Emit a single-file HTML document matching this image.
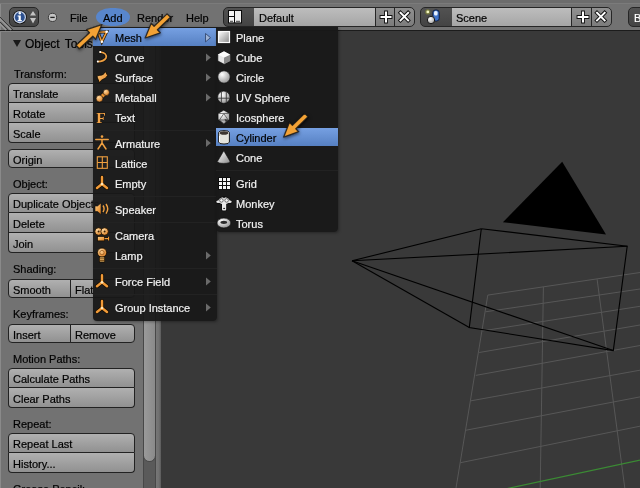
<!DOCTYPE html>
<html><head><meta charset="utf-8">
<style>
*{box-sizing:border-box;margin:0;padding:0}
html,body{width:640px;height:488px;overflow:hidden;background:#393939;font-family:"Liberation Sans",sans-serif;font-size:11px;position:relative}
.a{position:absolute}
#hdr{left:0;top:0;width:640px;height:30px;background:#727272}
#hdrline{left:0;top:30px;width:640px;height:1px;background:#1c1c1c}
#shelf{left:0;top:31px;width:161px;height:457px;background:#727272;border-left:1px solid #8a8a8a}
.lbl{will-change:transform;-webkit-text-stroke:0.2px currentColor;position:absolute;color:#000;font-size:11px;white-space:nowrap}
.btn{will-change:transform;-webkit-text-stroke:0.2px #000;position:absolute;left:8px;width:127px;height:20px;border:1px solid #222;background:linear-gradient(#b0b0b0,#919191);color:#000;white-space:nowrap;overflow:hidden;padding-left:4px;line-height:20px}
.menu{position:absolute;background:rgba(24,24,24,0.95);color:#f2f2f2;border-radius:0 0 4px 4px;box-shadow:1px 1px 3px rgba(0,0,0,.35)}
.mi{position:absolute;left:0;right:0;height:18px;line-height:18px;white-space:nowrap}
.mi span{position:absolute}
.sel{background:linear-gradient(#76a0e2,#5680c2);color:#000}
.sep{position:absolute;left:0;right:0;height:1px;background:#222222}
.mi span{top:1px;will-change:transform;-webkit-text-stroke:0.2px currentColor}
.arr{position:absolute;width:0;height:0;border-left:4px solid #555;border-top:4px solid transparent;border-bottom:4px solid transparent}
</style></head><body>
<!-- viewport -->
<svg class="a" style="left:0;top:0" width="640" height="488">
 <g stroke="#575757" stroke-width="1" fill="none">
  <line x1="487.8" y1="295.1" x2="456" y2="488"/>
  <line x1="543.4" y1="287" x2="540.2" y2="488"/>
  <line x1="597.1" y1="279.2" x2="624.8" y2="488"/>
  <line x1="487.8" y1="295.1" x2="640" y2="272.5"/>
  <line x1="485.4" y1="311.8" x2="640" y2="289"/>
  <line x1="482.3" y1="330.9" x2="640" y2="306.3"/>
  <line x1="479.2" y1="352.5" x2="640" y2="325"/>
  <line x1="475.8" y1="375.4" x2="640" y2="345.5"/>
  <line x1="470.5" y1="400.9" x2="640" y2="370.2"/>
  <line x1="465.5" y1="430.3" x2="640" y2="396.9"/>
  <line x1="460.5" y1="462.7" x2="640" y2="426.2"/>
 </g>
 <line x1="454.2" y1="499.9" x2="640" y2="460.2" stroke="#3b8a34" stroke-width="1.2"/>
 <polygon points="562.2,161.7 502.9,222.2 606,234.4" fill="#000"/>
 <g stroke="#000" stroke-width="1.1" fill="none">
  <polyline points="481.3,228.7 627.2,246.3 613.3,350.6 469.3,327.5 481.3,228.7"/>
  <line x1="352" y1="260.8" x2="481.3" y2="228.7"/>
  <line x1="352" y1="260.8" x2="627.2" y2="246.3"/>
  <line x1="352" y1="260.8" x2="469.3" y2="327.5"/>
  <line x1="352" y1="260.8" x2="613.3" y2="350.6"/>
 </g>
</svg>

<div id="hdr" class="a"></div>
<div id="hdrline" class="a"></div>
<div class="a" style="left:0;top:0;width:1px;height:30px;background:#8a8a8a"></div>
<!-- header widgets -->
<div class="a" style="left:0;top:0;width:640px;height:4px;background:#6c6c6c;border-bottom:1px solid #7b7b7b"></div>
<div class="a" style="left:9px;top:7px;width:30px;height:20px;border-radius:5px;background:linear-gradient(#525252,#444444);border:1px solid #262626"></div>
<div class="a" style="left:95.5px;top:7.5px;width:34.5px;height:18.5px;border-radius:15px / 9.25px;background:#5886cc"></div>
<div class="lbl" style="left:70px;top:12px">File</div>
<div class="lbl" style="left:103px;top:12px">Add</div>
<div class="lbl" style="left:137px;top:12px">Render</div>
<div class="lbl" style="left:186px;top:12px">Help</div>
<div class="a" style="left:223px;top:7px;width:32px;height:20px;border-radius:5px 0 0 5px;background:linear-gradient(#525252,#444444);border:1px solid #262626"></div>
<div class="a" style="left:254px;top:7px;width:122px;height:20px;background:linear-gradient(#bdbdbd,#a6a6a6);border:1px solid #262626;border-left:none"></div>
<div class="a" style="left:375px;top:7px;width:20px;height:20px;background:linear-gradient(#909090,#7c7c7c);border:1px solid #262626"></div>
<div class="a" style="left:394px;top:7px;width:21px;height:20px;border-radius:0 5px 5px 0;background:linear-gradient(#909090,#7c7c7c);border:1px solid #262626"></div>
<div class="lbl" style="left:259px;top:12px">Default</div>
<div class="a" style="left:420px;top:7px;width:33px;height:20px;border-radius:5px 0 0 5px;background:linear-gradient(#525252,#444444);border:1px solid #262626"></div>
<div class="a" style="left:452px;top:7px;width:120px;height:20px;background:linear-gradient(#bdbdbd,#a6a6a6);border:1px solid #262626;border-left:none"></div>
<div class="a" style="left:571px;top:7px;width:21px;height:20px;background:linear-gradient(#909090,#7c7c7c);border:1px solid #262626"></div>
<div class="a" style="left:591px;top:7px;width:21px;height:20px;border-radius:0 5px 5px 0;background:linear-gradient(#909090,#7c7c7c);border:1px solid #262626"></div>
<div class="lbl" style="left:456px;top:12px">Scene</div>
<div class="a" style="left:628px;top:7px;width:20px;height:20px;border-radius:5px;background:linear-gradient(#525252,#444444);border:1px solid #262626"></div>
<div class="lbl" style="left:634px;top:12px;color:#fff">B</div>
<svg class="a" style="left:0;top:0" width="640" height="31">
 <!-- region corner lines -->
 <g stroke="#9a9a9a" stroke-width="1.3"><line x1="0" y1="19" x2="11" y2="30"/><line x1="0" y1="24" x2="6" y2="30"/></g>
 <g stroke="#3a3a3a" stroke-width="1"><line x1="0" y1="17" x2="13" y2="30"/><line x1="0" y1="22" x2="8" y2="30"/></g>
 <!-- info -->
 <circle cx="19.8" cy="17.2" r="7" fill="#141414"/>
 <circle cx="19.8" cy="17.2" r="6.2" fill="#c4d0e6"/>
 <circle cx="19.8" cy="17.2" r="4.9" fill="#2c5090"/>
 <circle cx="19.8" cy="13.2" r="1.2" fill="#fff"/>
 <path d="M17.6 15.4h3.2v4.6h1v1.2h-4.2v-1.2h1v-3.4h-1z" fill="#fff"/>
 <path d="M30 15.5 L33 11 L36 15.5Z M30 18 L33 23.4 L36 18Z" fill="#c4c4c4"/>
 <!-- minus circle -->
 <circle cx="52.5" cy="17.4" r="4.1" fill="#c4c4c4" stroke="#3c3c3c" stroke-width="1"/>
 <line x1="50.3" y1="17.4" x2="54.7" y2="17.4" stroke="#222" stroke-width="1.3"/>
 <!-- layout icon -->
 <rect x="228" y="10" width="14" height="13.4" fill="#0a0a0a"/>
 <rect x="229" y="11" width="5" height="5" fill="#f4f4f4"/>
 <rect x="229" y="17" width="5" height="5.4" fill="#f4f4f4"/>
 <rect x="235" y="11" width="6" height="11.4" fill="#eeeeee"/>
 <path d="M230 21.3h3M236 21.3h4" stroke="#444" stroke-width="1"/>
 <!-- plus / x -->
 <g stroke="#111" stroke-width="3.8" stroke-linecap="square"><path d="M386 12.5v9M381.5 17h9"/><path d="M400.5 12.8l7.6 7.6M408.1 12.8l-7.6 7.6"/><path d="M583 12.5v9M578.5 17h9"/><path d="M597 12.8l7.6 7.6M604.6 12.8l-7.6 7.6"/></g>
 <g stroke="#fff" stroke-width="2" stroke-linecap="square"><path d="M386 12.5v9M381.5 17h9"/><path d="M400.5 12.8l7.6 7.6M408.1 12.8l-7.6 7.6"/><path d="M583 12.5v9M578.5 17h9"/><path d="M597 12.8l7.6 7.6M604.6 12.8l-7.6 7.6"/></g>
 <!-- scene icon -->
 <circle cx="427.8" cy="11.9" r="2.6" fill="#9aa030" opacity="0.5"/>
 <circle cx="427.8" cy="11.9" r="1.4" fill="#f4f8c0"/>
 <rect x="432.8" y="10" width="6.4" height="11" rx="2.6" fill="#3f72c8" stroke="#0c1a3a" stroke-width="0.9"/>
 <rect x="434" y="11" width="3.6" height="4.5" rx="1.6" fill="#e6f0ff"/>
 <circle cx="431" cy="20" r="3.7" fill="url(#wr2)" stroke="#0a0a0a" stroke-width="0.9"/>
 <defs><radialGradient id="wr2" cx="0.4" cy="0.35" r="0.7"><stop offset="0" stop-color="#ffffff"/><stop offset="1" stop-color="#9a9a9a"/></radialGradient></defs>
</svg>
<div id="shelf" class="a"></div>
<div class="a" style="left:0;top:31px;width:161px;height:1px;background:#858585"></div>

<!-- shelf content -->
<div class="a" style="left:13px;top:40px;width:0;height:0;border-left:4px solid transparent;border-right:4px solid transparent;border-top:7px solid #1a1a1a"></div>
<div class="lbl" style="left:25px;top:37px;font-size:12px;word-spacing:2px">Object Tools</div>
<div class="lbl" style="left:14px;top:68px">Transform:</div>
<div class="btn" style="top:83px;border-radius:4px 4px 0 0">Translate</div>
<div class="btn" style="top:103px;border-top:none;padding-top:1px;height:20px">Rotate</div>
<div class="btn" style="top:123px;border-top:none;padding-top:1px;border-radius:0 0 4px 4px">Scale</div>
<div class="btn" style="top:149px;height:19px;border-radius:4px">Origin</div>
<div class="lbl" style="left:13px;top:178px">Object:</div>
<div class="btn" style="top:193px;border-radius:4px 4px 0 0">Duplicate Objects</div>
<div class="btn" style="top:213px;border-top:none;padding-top:1px">Delete</div>
<div class="btn" style="top:233px;border-top:none;padding-top:1px;border-radius:0 0 4px 4px">Join</div>
<div class="lbl" style="left:13px;top:263px">Shading:</div>
<div class="btn" style="top:279px;width:63px;height:19px;border-radius:4px 0 0 4px">Smooth</div>
<div class="btn" style="top:279px;left:70px;width:65px;height:19px;border-radius:0 4px 4px 0">Flat</div>
<div class="lbl" style="left:13px;top:308px">Keyframes:</div>
<div class="btn" style="top:324px;width:63px;height:19px;border-radius:4px 0 0 4px">Insert</div>
<div class="btn" style="top:324px;left:70px;width:65px;height:19px;border-radius:0 4px 4px 0">Remove</div>
<div class="lbl" style="left:13px;top:353px">Motion Paths:</div>
<div class="btn" style="top:368px;border-radius:4px 4px 0 0">Calculate Paths</div>
<div class="btn" style="top:388px;border-top:none;padding-top:1px;border-radius:0 0 4px 4px">Clear Paths</div>
<div class="lbl" style="left:13px;top:418px">Repeat:</div>
<div class="btn" style="top:433px;border-radius:4px 4px 0 0">Repeat Last</div>
<div class="btn" style="top:453px;border-top:none;padding-top:1px;border-radius:0 0 4px 4px">History...</div>
<div class="lbl" style="left:13px;top:483px">Grease Pencil:</div>
<!-- scrollbar -->
<div class="a" style="left:143px;top:31px;width:13px;height:457px;background:#5a5a5a;border-left:1px solid #484848;border-right:1px solid #484848"></div>
<div class="a" style="left:143px;top:31px;width:13px;height:431px;background:linear-gradient(90deg,#9a9a9a,#8a8a8a);border-radius:0 0 7px 7px;border:1px solid #484848;border-top:none;padding-top:1px"></div>
<div class="a" style="left:156px;top:31px;width:5px;height:457px;background:linear-gradient(90deg,#777,#707070 60%,#5a5a5a)"></div>

<!-- main menu -->
<div class="menu" style="left:93px;top:27px;width:124px;height:294px">
 <div class="mi sel" style="top:1px"><span style="left:22px">Mesh</span></div>
 <div class="mi" style="top:21px"><span style="left:22px">Curve</span></div>
 <div class="mi" style="top:41px"><span style="left:22px">Surface</span></div>
 <div class="mi" style="top:61px"><span style="left:22px">Metaball</span></div>
 <div class="mi" style="top:81px"><span style="left:22px">Text</span></div>
 <div class="sep" style="top:103px"></div>
 <div class="mi" style="top:107px"><span style="left:22px">Armature</span></div>
 <div class="mi" style="top:127px"><span style="left:22px">Lattice</span></div>
 <div class="mi" style="top:147px"><span style="left:22px">Empty</span></div>
 <div class="sep" style="top:169px"></div>
 <div class="mi" style="top:173px"><span style="left:22px">Speaker</span></div>
 <div class="sep" style="top:195px"></div>
 <div class="mi" style="top:199px"><span style="left:22px">Camera</span></div>
 <div class="mi" style="top:219px"><span style="left:22px">Lamp</span></div>
 <div class="sep" style="top:241px"></div>
 <div class="mi" style="top:245px"><span style="left:22px">Force Field</span></div>
 <div class="sep" style="top:267px"></div>
 <div class="mi" style="top:271px"><span style="left:22px">Group Instance</span></div>
</div>

<!-- sub menu -->
<div class="menu" style="left:216px;top:27px;width:122px;height:205px">
 <div class="mi" style="top:1px"><span style="left:20px">Plane</span></div>
 <div class="mi" style="top:21px"><span style="left:20px">Cube</span></div>
 <div class="mi" style="top:41px"><span style="left:20px">Circle</span></div>
 <div class="mi" style="top:61px"><span style="left:20px">UV Sphere</span></div>
 <div class="mi" style="top:81px"><span style="left:20px">Icosphere</span></div>
 <div class="mi sel" style="top:101px"><span style="left:20px">Cylinder</span></div>
 <div class="mi" style="top:121px"><span style="left:20px">Cone</span></div>
 <div class="sep" style="top:143px"></div>
 <div class="mi" style="top:147px"><span style="left:20px">Grid</span></div>
 <div class="mi" style="top:167px"><span style="left:20px">Monkey</span></div>
 <div class="mi" style="top:187px"><span style="left:20px">Torus</span></div>
</div>

<svg class="a" style="left:0;top:0" width="640" height="488">
 <defs>
  <linearGradient id="og" x1="0" y1="0" x2="1" y2="1"><stop offset="0" stop-color="#ffd08a"/><stop offset="1" stop-color="#e07d18"/></linearGradient>
  <linearGradient id="wg" x1="0" y1="0" x2="1" y2="1"><stop offset="0" stop-color="#ffffff"/><stop offset="1" stop-color="#8a8a8a"/></linearGradient>
  <radialGradient id="wr" cx="0.35" cy="0.3" r="0.8"><stop offset="0" stop-color="#ffffff"/><stop offset="1" stop-color="#8c8c8c"/></radialGradient>
  <radialGradient id="orr" cx="0.35" cy="0.3" r="0.8"><stop offset="0" stop-color="#ffd9a0"/><stop offset="1" stop-color="#d9781a"/></radialGradient>
 </defs>
 <!-- submenu arrows -->
 <g fill="#6a6a6a">
  <path d="M205.5 33.5l5 4.2-5 4.2z" fill="#9fb4d6" stroke="#2a3e66" stroke-width="0.8"/>
  <path d="M206 53.5l4.8 4-4.8 4z"/>
  <path d="M206 73.5l4.8 4-4.8 4z"/>
  <path d="M206 93.5l4.8 4-4.8 4z"/>
  <path d="M206 139l4.8 4-4.8 4z"/>
  <path d="M206 251.5l4.8 4-4.8 4z"/>
  <path d="M206 277.5l4.8 4-4.8 4z"/>
  <path d="M206 303.5l4.8 4-4.8 4z"/>
 </g>
 <!-- mesh -->
 <path d="M98 32.3 L106.7 31.8 L101.8 41.8Z" fill="none" stroke="#2a1a00" stroke-width="3"/>
 <path d="M98 32.3 L106.7 31.8 L101.8 41.8Z" fill="none" stroke="#f0a040" stroke-width="1.5"/>
 <g fill="#fff"><circle cx="98" cy="32.3" r="1.3"/><circle cx="106.7" cy="31.8" r="1.3"/><circle cx="101.8" cy="41.8" r="1.3"/></g>
 <!-- curve -->
 <path d="M100.2 52 Q107.5 53 106 58 Q104 61.5 97.8 61.6" fill="none" stroke="#111" stroke-width="3.2" stroke-linecap="round"/>
 <path d="M100.2 52 Q107.5 53 106 58 Q104 61.5 97.8 61.6" fill="none" stroke="#f0a040" stroke-width="1.6" stroke-linecap="round"/>
 <circle cx="100.2" cy="52" r="1" fill="#fff"/><circle cx="97.8" cy="61.6" r="1" fill="#fff"/>
 <!-- surface -->
 <path d="M97 76.8 C99.5 73.5 102 77.5 105.6 71.5 L107.6 75.6 C104.6 80.2 102.2 78 99.4 82.8 Z" fill="url(#og)" stroke="#140c00" stroke-width="0.9" stroke-linejoin="round"/>
 <!-- metaball -->
 <line x1="99.5" y1="98.6" x2="106.3" y2="92.4" stroke="#111" stroke-width="4.6"/><line x1="99.5" y1="98.6" x2="106.3" y2="92.4" stroke="#e8902e" stroke-width="3.4"/>
 <circle cx="99.5" cy="98.6" r="3.4" fill="url(#orr)" stroke="#111" stroke-width="0.6"/>
 <circle cx="106.3" cy="92.4" r="3.1" fill="url(#orr)" stroke="#111" stroke-width="0.6"/>
 <!-- text F -->
 <text x="96.2" y="122.8" font-family="Liberation Serif" font-size="15.5" font-weight="bold" fill="#f5a548" stroke="#1a0e00" stroke-width="0.5" paint-order="stroke">F</text>
 <!-- armature -->
 <g stroke="#f0a040" stroke-width="1.5" fill="none" stroke-linecap="round">
  <path d="M95.8 139.5H108.2M102 139.5V143M102 143L98 149M102 143L106 149"/>
 </g>
 <circle cx="102" cy="136.6" r="1.3" fill="#f0a040"/>
 <!-- lattice -->
 <g stroke="#f0a040" stroke-width="1.1" fill="none">
  <rect x="97.3" y="156.8" width="10" height="11.5"/><path d="M102.3 156.8V168.3M97.3 162.5H107.3"/>
 </g>
 <!-- empty / force / group -->
 <path d="M102.0 177.0V184.0M102.0 184.0L97.0 188.0M102.0 184.0L107.0 188.0M102.0 275.3V282.3M102.0 282.3L97.0 286.3M102.0 282.3L107.0 286.3M102.0 301.0V308.0M102.0 308.0L97.0 312.0M102.0 308.0L107.0 312.0" stroke="#140c00" stroke-width="3.8" fill="none" stroke-linecap="round"/>
 <path d="M102.0 177.0V184.0M102.0 184.0L97.0 188.0M102.0 184.0L107.0 188.0M102.0 275.3V282.3M102.0 282.3L97.0 286.3M102.0 282.3L107.0 286.3M102.0 301.0V308.0M102.0 308.0L97.0 312.0M102.0 308.0L107.0 312.0" stroke="#f09a38" stroke-width="2.4" fill="none" stroke-linecap="round"/>
 <circle cx="102.0" cy="184.0" r="1.3" fill="#ffe6b8"/>
 <circle cx="102.0" cy="282.3" r="1.3" fill="#ffe6b8"/>
 <circle cx="102.0" cy="308.0" r="1.3" fill="#ffe6b8"/>
 <!-- speaker -->
 <path d="M95 206h2.5l3.5-3v11.5l-3.5-3H95z" fill="url(#og)" stroke="#111" stroke-width="0.6"/>
 <path d="M103 205.5q2.2 3.3 0 6.6M106 204q3.4 4.8 0 9.6" fill="none" stroke="#f0a040" stroke-width="1.4"/>
 <!-- camera -->
 <circle cx="98.6" cy="231.5" r="3.8" fill="url(#orr)" stroke="#140c00" stroke-width="0.8"/>
 <circle cx="104.6" cy="231.5" r="3.8" fill="url(#orr)" stroke="#140c00" stroke-width="0.8"/>
 <circle cx="98.6" cy="231.5" r="1" fill="#3a2000"/><circle cx="104.6" cy="231.5" r="1" fill="#3a2000"/>
 <rect x="97.5" y="236.5" width="7" height="4.4" fill="url(#og)" stroke="#140c00" stroke-width="0.7"/>
 <path d="M104.5 238.6h4M108.6 236.8v3.6" stroke="#140c00" stroke-width="2.2"/>
 <path d="M104.5 238.6h4M108.6 236.8v3.6" stroke="#f09a38" stroke-width="1.1"/>
 <!-- lamp -->
 <circle cx="102" cy="252.6" r="4.6" fill="url(#orr)" stroke="#140c00" stroke-width="0.8"/>
 <circle cx="102" cy="252.6" r="2.2" fill="none" stroke="#8a4a10" stroke-width="0.7"/>
 <rect x="99.4" y="257" width="5.2" height="5" fill="#f2c070" stroke="#140c00" stroke-width="0.7"/>
 <path d="M99.4 258.8h5.2M99.4 260.6h5.2" stroke="#5a3000" stroke-width="0.8"/>
 <!-- plane -->
 <rect x="218.5" y="31.5" width="11" height="11" fill="url(#wg)" stroke="#fafafa" stroke-width="1.2"/>
 <!-- cube -->
 <path d="M224 51.2 L230.2 54.4 L230.2 61 L224 64.2 L217.8 61 L217.8 54.4Z" fill="#e6e6e6" stroke="#0a0a0a" stroke-width="0.7"/>
 <path d="M224 57.6 L230.2 54.4 L230.2 61 L224 64.2Z" fill="#8a8a8a"/>
 <path d="M217.8 54.4 L224 51.2 L230.2 54.4 L224 57.6Z" fill="#fbfbfb"/>
 <!-- circle -->
 <circle cx="224" cy="77" r="6.2" fill="url(#wr)" stroke="#0a0a0a" stroke-width="0.7"/>
 <!-- uv sphere -->
 <circle cx="223.8" cy="97.2" r="6.2" fill="url(#wr)" stroke="#0a0a0a" stroke-width="0.7"/>
 <path d="M221.4 91.5V103M226.3 91.5V103M217.8 98.2H229.8" stroke="#3a3a3a" stroke-width="0.9" fill="none"/>
 <!-- icosphere -->
 <path d="M223.8 110.1 L229.6 113.4 L229.6 119.6 L223.8 124.1 L218 119.6 L218 113.4Z" fill="url(#wr)" stroke="#0a0a0a" stroke-width="0.7"/>
 <path d="M219.5 120 L223.8 113.6 L228.2 120 Z M218 113.4 L223.8 113.6 L229.6 113.4 M223.8 124 L219.5 120 M223.8 124 L228.2 120" fill="none" stroke="#444" stroke-width="0.7"/>
 <path d="M224.5 119 L228.2 120 L226 122.5Z" fill="#333"/>
 <!-- cylinder -->
 <path d="M218.6 132.5 Q218.6 130.6 224 130.6 Q229.4 130.6 229.4 132.5 V142 Q229.4 144 224 144 Q218.6 144 218.6 142Z" fill="#e4e4dc" stroke="#0a0a0a" stroke-width="0.9"/>
 <ellipse cx="224" cy="133" rx="4.3" ry="1.8" fill="#3c3630"/>
 <path d="M219.5 136 V142" stroke="#fff" stroke-width="1"/>
 <!-- cone -->
 <path d="M223.8 150.8 L230 161.2 Q230 163.4 223.8 163.4 Q217.6 163.4 217.6 161.2Z" fill="url(#wg)" stroke="#0a0a0a" stroke-width="0.6"/>
 <!-- grid -->
 <rect x="218" y="177" width="13" height="13" fill="#0c0c0c"/>
 <g fill="#f4f4f4">
  <rect x="219" y="178" width="3" height="3"/><rect x="223" y="178" width="3" height="3"/><rect x="227" y="178" width="3" height="3"/>
  <rect x="219" y="182" width="3" height="3"/><rect x="223" y="182" width="3" height="3"/><rect x="227" y="182" width="3" height="3"/>
  <rect x="219" y="186" width="3" height="3"/><rect x="223" y="186" width="3" height="3"/><rect x="227" y="186" width="3" height="3"/>
 </g>
 <!-- monkey -->
 <g fill="#0a0a0a" stroke="#0a0a0a" stroke-width="1.4"><ellipse cx="224" cy="200.8" rx="5.6" ry="3.6"/><ellipse cx="218.2" cy="201.7" rx="1.9" ry="1.3"/><ellipse cx="229.8" cy="201.7" rx="1.9" ry="1.3"/><rect x="222" y="203" width="4.2" height="7.6" rx="1"/></g>
 <g fill="#e8e8e8"><ellipse cx="224" cy="200.8" rx="5.6" ry="3.6"/><ellipse cx="218.2" cy="201.7" rx="1.9" ry="1.3"/><ellipse cx="229.8" cy="201.7" rx="1.9" ry="1.3"/><rect x="222" y="203" width="4.2" height="7.6" rx="1"/></g>
 <path d="M222.6 196.6 L224 198.4 L225.4 196.6Z" fill="#0a0a0a"/>
 <circle cx="221.4" cy="200.4" r="1.8" fill="#f4f4f4" stroke="#3a3a3a" stroke-width="0.7"/><circle cx="226.6" cy="200.4" r="1.8" fill="#f4f4f4" stroke="#3a3a3a" stroke-width="0.7"/>
 <ellipse cx="224.1" cy="208.4" rx="1" ry="0.6" fill="#222"/>
 <!-- torus -->
 <ellipse cx="223.9" cy="223" rx="6.9" ry="4.9" fill="url(#wr)" stroke="#0a0a0a" stroke-width="0.6"/>
 <ellipse cx="223.8" cy="222.3" rx="3.4" ry="1.6" fill="#2a2a2a"/>
</svg>
<svg class="a" style="left:0;top:0" width="640" height="488">
 <defs><filter id="ds" x="-30%" y="-30%" width="160%" height="160%"><feDropShadow dx="0.5" dy="1.5" stdDeviation="1.6" flood-color="#000" flood-opacity="0.55"/></filter></defs>
 <g filter="url(#ds)">
 <polygon points="101.8,24.6 86.7,29.6 89.5,32.7 76.1,45.2 79.3,48.8 92.8,36.2 95.7,39.3" fill="#f3a235" stroke="#141414" stroke-opacity="0.8" stroke-width="1.3" stroke-linejoin="round"/>
 <polygon points="145.2,38.0 160.3,32.8 157.4,29.8 170.5,17.3 167.1,13.9 154.1,26.3 151.2,23.2" fill="#f3a235" stroke="#141414" stroke-opacity="0.8" stroke-width="1.3" stroke-linejoin="round"/>
 <polygon points="283.7,137.1 298.7,131.7 295.8,128.7 308.1,116.8 304.7,113.4 292.4,125.3 289.5,122.3" fill="#f3a235" stroke="#141414" stroke-opacity="0.8" stroke-width="1.3" stroke-linejoin="round"/>
</g>
</svg>
</body></html>
